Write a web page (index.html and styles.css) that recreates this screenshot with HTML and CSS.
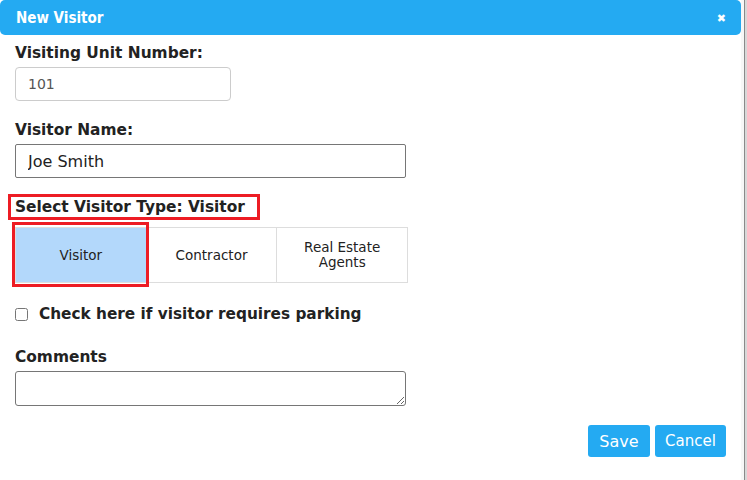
FILE: index.html
```html
<!DOCTYPE html>
<html lang="en">
<head>
    <meta charset="UTF-8">
    <meta name="viewport" content="width=device-width, initial-scale=1.0">
    <title>New Visitor</title>
    <link rel="stylesheet" href="styles.css">
</head>
<body>
    <div class="page">
        <div class="dialog">
            <header class="dialog-header">
                <span class="dialog-title">New Visitor</span>
                <span class="dialog-close">&#10006;</span>
            </header>

            <main class="dialog-body">
                <div class="field">
                    <label class="field-label">Visiting Unit Number:</label>
                    <input class="input input-unit" type="text" value="101" readonly>
                </div>

                <div class="field">
                    <label class="field-label">Visitor Name:</label>
                    <input class="input input-name" type="text" value="Joe Smith">
                </div>

                <div class="field type-field">
                    <label class="field-label highlight">Select Visitor Type: Visitor</label>
                    <div class="type-group">
                        <button class="type-btn selected">Visitor</button>
                        <button class="type-btn">Contractor</button>
                        <button class="type-btn">Real Estate<br>Agents</button>
                    </div>
                </div>

                <label class="check-row">
                    <input type="checkbox">
                    <span>Check here if visitor requires parking</span>
                </label>

                <div class="field">
                    <label class="field-label">Comments</label>
                    <textarea class="input input-comments"></textarea>
                </div>
            </main>

            <footer class="dialog-footer">
                <button class="action-btn btn-save">Save</button>
                <button class="action-btn btn-cancel">Cancel</button>
            </footer>
        </div>
        <div class="page-edge"></div>
    </div>
</body>
</html>
```

FILE: styles.css
```css
/* --- Base --- */
html, body {
    margin: 0;
    padding: 0;
    height: 100%;
    overflow: hidden;
    background-color: white;
    font-family: "DejaVu Sans", Verdana, sans-serif;
    color: #222;
}

.page {
    display: flex;
    height: 100%;
}

/* --- Dialog --- */
.dialog {
    width: 741px;
    flex-shrink: 0;
    display: flex;
    flex-direction: column;
    background-color: white;
}

.dialog-header {
    height: 35px;
    flex-shrink: 0;
    display: flex;
    align-items: center;
    justify-content: space-between;
    padding: 0 15px 0 16px;
    background-color: #24aaf2;
    border-radius: 5px;
    color: white;
    box-sizing: border-box;
}

.dialog-title {
    font-family: "Liberation Sans Narrow", "DejaVu Sans Condensed", sans-serif;
    font-weight: bold;
    font-size: 15px;
}

.dialog-close {
    font-size: 11px;
    font-weight: bold;
    margin-top: 1px;
}

.dialog-body {
    padding: 7px 15px 0 15px;
    display: flex;
    flex-direction: column;
}

.field {
    display: flex;
    flex-direction: column;
    align-items: flex-start;
}

.field-label {
    font-size: 15.4px;
    font-weight: bold;
    line-height: 22px;
    margin-bottom: 3px;
}

.field + .field {
    margin-top: 18px;
}

.field.type-field {
    margin-top: 16px;
}

.highlight {
    margin: 0 0 7px -7px;
    padding: 0 12px 0 4px;
    line-height: 20px;
    border: 3px solid #ed1c24;
}

/* --- Inputs --- */
.input {
    font-family: "DejaVu Sans", Verdana, sans-serif;
    font-size: 15px;
    color: #222;
    box-sizing: border-box;
    padding: 0 12px;
    background: white;
    outline: none;
}

.input-unit {
    width: 216px;
    height: 34px;
    border: 1px solid #ccc;
    border-radius: 4px;
    color: #555;
    font-size: 14px;
}

.input-name {
    width: 391px;
    height: 34px;
    border: 1px solid #767676;
    border-radius: 2px;
    font-size: 16px;
}

/* --- Visitor type buttons --- */
.type-group {
    display: flex;
    width: 393px;
    border: 1px solid #ddd;
    box-sizing: border-box;
}

.type-btn {
    position: relative;
    width: 131px;
    height: 54px;
    font-family: "DejaVu Sans", Verdana, sans-serif;
    font-size: 13.5px;
    line-height: 15px;
    color: #222;
    background-color: white;
    border: none;
    border-left: 1px solid #ddd;
    padding: 0;
}

.type-btn:first-child {
    border-left: none;
    width: 130px;
}

.type-btn.selected {
    background-color: #b3d8fb;
    z-index: 1;
}

.type-btn.selected::after {
    content: "";
    position: absolute;
    top: -6px;
    left: -4px;
    right: -3px;
    bottom: -5px;
    border: 3px solid #ed1c24;
}

/* --- Checkbox --- */
.check-row {
    display: flex;
    align-items: center;
    margin-top: 20px;
    font-size: 15.3px;
    font-weight: bold;
    line-height: 22px;
}

.check-row input {
    width: 13px;
    height: 13px;
    margin: 0 11px 0 0;
}

.check-row + .field {
    margin-top: 21px;
}

.input-comments {
    width: 391px;
    height: 35px;
    border: 1px solid #767676;
    border-radius: 3px;
    resize: vertical;
}

/* --- Footer --- */
.dialog-footer {
    display: flex;
    justify-content: flex-end;
    gap: 5px;
    padding: 19px 15px 0 0;
}

.action-btn {
    height: 32px;
    padding: 0;
    font-family: "DejaVu Sans", Verdana, sans-serif;
    font-size: 15px;
    color: white;
    background-color: #24aaf2;
    border: none;
    border-radius: 3px;
}

.btn-save {
    width: 62px;
    font-size: 16px;
}

.btn-cancel {
    width: 71px;
}

/* --- Right edge of the window --- */
.page-edge {
    flex-grow: 1;
    border-left: 3px solid #f7f7f7;
    background: linear-gradient(to right, #8a8a8a 0, #8a8a8a 1px, #d8d8d8 1px);
}
```
